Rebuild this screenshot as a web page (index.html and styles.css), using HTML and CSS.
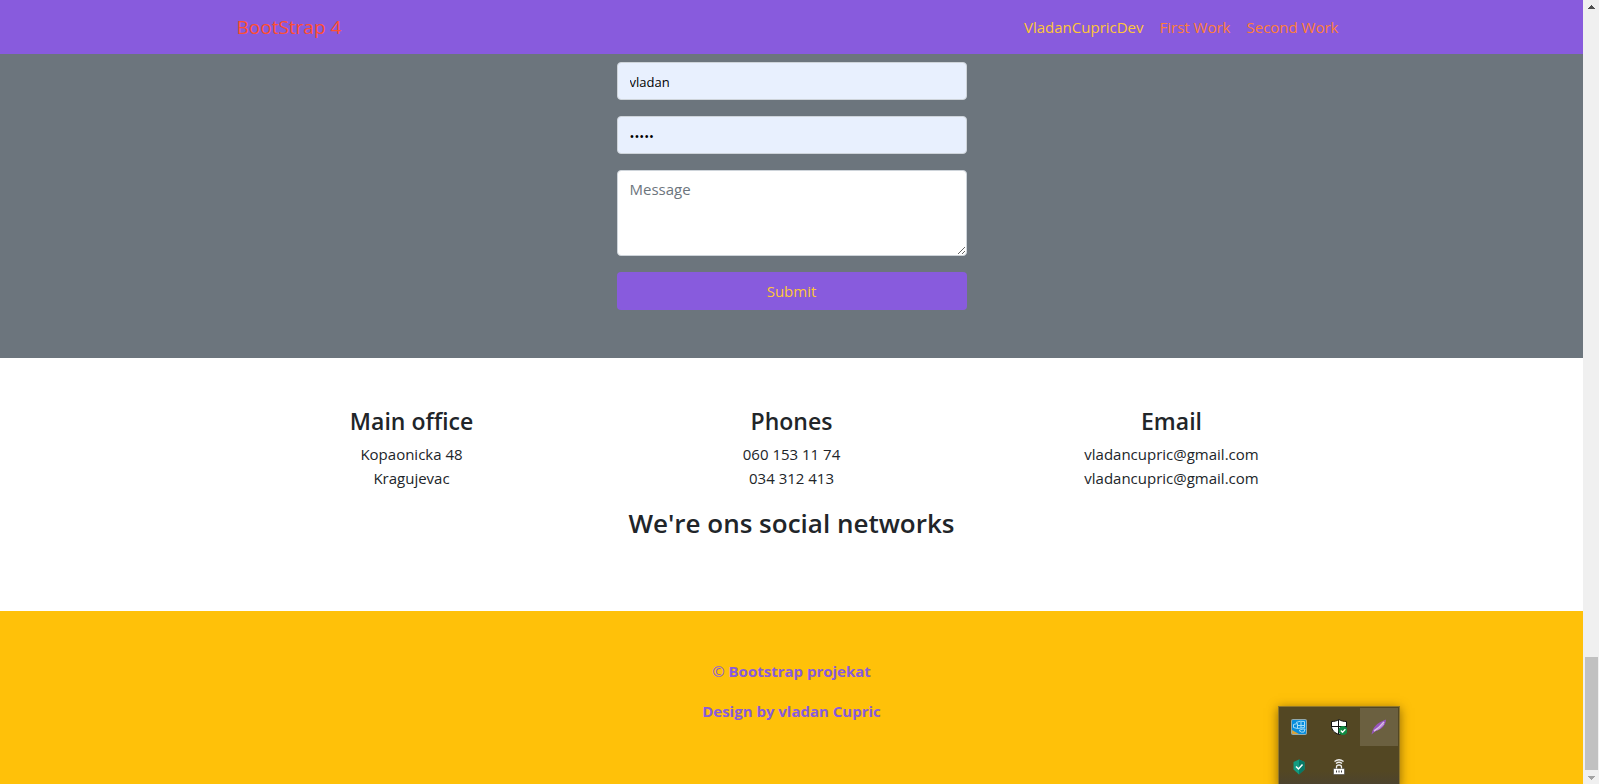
FILE: index.html
```html
<!DOCTYPE html>
<html lang="en">
<head>
<meta charset="utf-8">
<title>BootStrap 4</title>
<link rel="stylesheet" href="styles.css">
</head>
<body>
<div class="window">
  <div class="page">
    <header class="navbar">
      <nav class="container nav-inner">
        <a class="brand" href="#">BootStrap 4</a>
        <div class="nav-links">
          <a class="nav-link active" href="#">VladanCupricDev</a>
          <a class="nav-link" href="#">First Work</a>
          <a class="nav-link" href="#">Second Work</a>
        </div>
      </nav>
    </header>
    <main>
      <section class="contact">
        <form class="contact-form">
          <input class="field autofilled" type="text" value="vladan" aria-label="Name">
          <input class="field autofilled" type="password" value="12345" aria-label="Password">
          <textarea class="field message" placeholder="Message" rows="3" aria-label="Message"></textarea>
          <button class="submit" type="button">Submit</button>
        </form>
      </section>
      <section class="info">
        <div class="container columns">
          <div class="column"><h4>Main office</h4><p>Kopaonicka 48<br>Kragujevac</p></div>
          <div class="column"><h4>Phones</h4><p>060 153 11 74<br>034 312 413</p></div>
          <div class="column"><h4>Email</h4><p>vladancupric@gmail.com<br>vladancupric@gmail.com</p></div>
        </div>
        <h3>We're ons social networks</h3>
      </section>
    </main>
    <footer class="footer">
      <p><span class="copy">©</span> Bootstrap projekat</p>
      <p>Design by vladan Cupric</p>
    </footer>
  </div>
  <div class="scrollbar" aria-hidden="true">
    <svg class="arrow" viewBox="0 0 16 17"><path fill="#505050" d="M8 5h1v1h1v1h1v1h1v1H5V8h1V7h1V6h1z"/></svg>
    <div class="track"><div class="thumb"></div></div>
    <svg class="arrow" viewBox="0 0 16 14"><path fill="#a3a3a3" d="M5 6h7v1h-1v1h-1v1H9v1H8V9H7V8H6V7H5z"/></svg>
  </div>
  <div class="tray">
    <button class="tray-item" type="button" aria-label="Graphics settings">
      <svg viewBox="0 0 16 16"><rect width="16" height="16" rx="2" fill="#91a9ae"/><rect x="1" y="1" width="14" height="14" rx="1" fill="#078ddd"/><path fill="#d9a33c" d="M1 11l7 4H1z"/><g fill="none" stroke="#a5dcf5"><path d="M2.500 5.500l4-1V9.500l-4-1zM5 3.500q4-2 8.500-1v6l-7 1M6.500 6.500h7M10 3v6M8 11.500q3-2 6-1.500l-1 3q-3 1-5-1.500"/></g></svg>
    </button>
    <button class="tray-item" type="button" aria-label="Security">
      <svg viewBox="0 0 16 16"><path fill="#fff" stroke="#111" d="M8 .5C6 2 3 2.500.5 2.500V7c0 4 3 7 7.500 8.500C12.500 14 15.500 11 15.500 7V2.500C13 2.500 10 2 8 .5z"/><path stroke="#111" d="M7.500 1v14M1 7.500h14"/><circle cx="12" cy="11.500" r="4.500" fill="#108a43"/><path fill="none" stroke="#fff" stroke-width="1.300" d="M9.800 11.500l1.700 1.700 2.900-3"/></svg>
    </button>
    <button class="tray-item selected" type="button" aria-label="Lightshot">
      <svg viewBox="0 0 16 16"><path fill="#9854bd" d="M.5 15.500C1.500 9 5 4 15 .5c0 5-4 10-11 12z"/><path fill="none" stroke="#d9bfe8" stroke-width="1.500" d="M3 12Q8 9 13 3"/><path fill="none" stroke="#c79bdd" d="M6 11q4-2 7-6"/></svg>
    </button>
    <button class="tray-item" type="button" aria-label="Antivirus">
      <svg viewBox="0 0 16 16"><path fill="#129b80" d="M8 .5L13.500 3v7.500L8 15.500 2.500 10.500V3z"/><path fill="#087866" d="M8 .5L13.500 3v7.500L8 15.500z"/><path fill="none" stroke="#fff" stroke-width="1.500" d="M5 7.500l2.500 2.500L11.500 5.500"/></svg>
    </button>
    <button class="tray-item" type="button" aria-label="VPN">
      <svg viewBox="0 0 16 16"><path fill="#fff" stroke="#333" stroke-width=".5" d="M2.500 9.500h11v6h-11z"/><path fill="none" stroke="#eee" stroke-width="1.300" d="M5.500 9.500V8q0-2 2.500-2t2.500 2v1.500M3.500 2.500q4.500-3.500 9 0M5 4.500q3-2.500 6 0"/><path stroke="#444" d="M5.500 11.500v2M8 11.500v2M10.500 11.500v2"/></svg>
    </button>
  </div>
</div>
</body>
</html>
```
FILE: styles.css
```css
* { box-sizing: border-box; }
body {
  margin: 0;
  font: 15px/24px "Segoe UI", "Open Sans", "Noto Sans", sans-serif;
  color: #212529;
}
p, h3, h4 { margin: 0; }
a { text-decoration: none; }
.window { display: flex; position: relative; height: 100vh; overflow: hidden; background: #fff; }
.page { flex: 1; display: flex; flex-direction: column; }
.container { width: 100%; max-width: 1140px; margin: 0 auto; }
.navbar { background: #885bdd; }
.nav-inner { display: flex; justify-content: space-between; align-items: center; padding: 12px 15px; }
.brand { color: #ff4f30; font-size: 19px; line-height: 30px; }
.nav-links { display: flex; gap: 16px; padding-right: 8px; }
.nav-link { color: #ff7e36; }
.nav-link.active { color: #ffc736; }
.contact { background: #6c757d; padding: 8px 16px 48px; }
.contact-form { display: flex; flex-direction: column; gap: 16px; max-width: 350px; margin: 0 auto; }
.field {
  width: 100%;
  height: 38px;
  padding: 6px 12px;
  border: 1px solid #ced4da;
  border-radius: 4px;
  background: #fff;
  color: #000;
  font: inherit;
}
.autofilled { background: #e8f0fe; font-size: 13px; padding: 8px 12px 6px; }
.message { display: block; height: 86px; resize: vertical; }
.message::placeholder { color: #6c757d; }
.submit { height: 38px; border: 0; border-radius: 4px; background: #885bdd; color: #ffc736; font: inherit; }
.info { padding: 48px 0 70px; text-align: center; }
.columns { display: flex; padding-bottom: 16px; }
.column { flex: 1; }
h4 { font-size: 23px; line-height: 30px; font-weight: 600; padding-bottom: 6px; }
h3 { font-size: 26px; line-height: 35px; font-weight: 600; }
.footer {
  flex: 1;
  display: flex;
  flex-direction: column;
  gap: 16px;
  padding: 48px 16px;
  background: #ffc109;
  color: #885bdd;
  font-weight: 700;
  text-align: center;
}
.copy { font-weight: 400; }
.scrollbar { width: 16px; display: flex; flex-direction: column; background: #f0f0f0; }
.arrow { display: block; width: 16px; flex: none; }
.track { flex: 1; display: flex; flex-direction: column; justify-content: flex-end; padding: 0 1px 0 2px; }
.thumb { height: 15%; background: #c1c1c1; }
.tray {
  position: absolute;
  right: 199px;
  bottom: -3px;
  display: grid;
  grid-template-columns: repeat(3, 38px);
  gap: 2px;
  padding: 1px;
  border: 1px solid #8f762a;
  border-bottom: 0;
  background: linear-gradient(#534723 80%, #4b4330);
  box-shadow: 0 2px 10px rgba(70, 45, 0, 0.6);
}
.tray-item { display: flex; align-items: center; justify-content: center; height: 38px; padding: 0; border: 0; background: none; }
.tray-item.selected { background: #6b6040; }
.tray-item svg { width: 16px; height: 16px; }
```
